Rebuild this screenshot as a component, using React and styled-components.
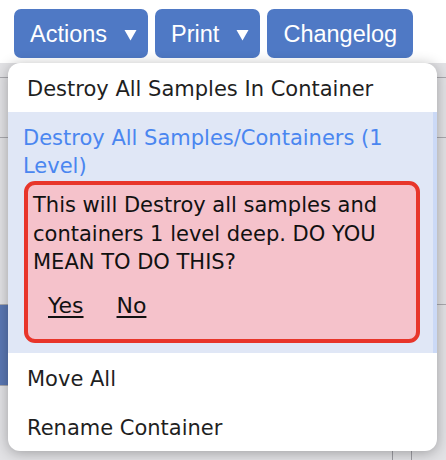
import React from "react";
import styled, { createGlobalStyle } from "styled-components";

const GlobalStyle = createGlobalStyle`
  html, body {
    margin: 0;
    padding: 0;
    background: #ffffff;
  }
`;

const Page = styled.div`
  position: relative;
  width: 446px;
  height: 460px;
  overflow: hidden;
  background: #ffffff;
  font-family: "DejaVu Sans", Verdana, sans-serif;
`;

const Toolbar = styled.div`
  display: flex;
  gap: 7px;
  padding: 9px 14px 0;
`;

const ToolButton = styled.div`
  display: flex;
  align-items: center;
  gap: ${(p) => (p.$caret ? "17px" : "0")};
  height: 49px;
  padding: 2px ${(p) => (p.$caret ? "11px" : "16px")} 0 16px;
  box-sizing: border-box;
  background: #4f79c5;
  border-radius: 7px;
  color: #ffffff;
  font-family: "Liberation Sans", Arial, sans-serif;
  font-size: 23.5px;
  white-space: nowrap;
`;

const Caret = () => (
  <svg width="13" height="12" viewBox="0 0 13 12">
    <path d="M0.5 1 L12.5 1 L6.5 11.5 Z" fill="#ffffff" />
  </svg>
);

const Underlay = styled.div`
  margin-top: 5px;
  height: 420px;
  background: #e2e2e5;
  display: flex;
  flex-direction: column;
`;

const UnderRow = styled.div`
  height: ${(p) => p.$h}px;
  border-bottom: 1px solid #a9a9ae;
  background: ${(p) => (p.$accent ? "#5a77b3" : "transparent")};
  width: ${(p) => (p.$accent ? "8px" : "auto")};
`;

const Footer = styled.div`
  flex: 1;
  display: flex;
  justify-content: flex-end;
  gap: 18px;
  padding-right: 34px;
`;

const FooterLine = styled.div`
  width: 1px;
  background: #9d9da3;
`;

const Menu = styled.div`
  position: absolute;
  top: 63px;
  left: 8px;
  width: 429px;
  background: #ffffff;
  border-radius: 12px;
  overflow: hidden;
  box-shadow: 0 2px 14px rgba(0, 0, 0, 0.3);
  font-size: 21px;
  line-height: 28px;
`;

const MenuItem = styled.div`
  padding: 12px 16px 9px 19px;
  color: #1f1f1f;
  white-space: nowrap;
`;

const ActiveItem = styled.div`
  padding: 12px 13px 10px 15px;
  background: #e0e7f6;
  border-right: 4px solid #cbd9f6;
`;

const ActiveLabel = styled.div`
  color: #4a86f0;
  margin-right: 30px;
`;

const ConfirmBox = styled.div`
  margin: 1px 0 0 1px;
  border: 4px solid #e8352a;
  border-radius: 11px;
  background: #f5c2cb;
  padding: 6px 6px 19px 5px;
  color: #111111;
`;

const Message = styled.div`
  line-height: 28.5px;
`;

const Choices = styled.div`
  display: flex;
  gap: 33px;
  margin: 15px 0 0 15px;
  font-size: 22px;
`;

const Choice = styled.span`
  color: #111111;
  text-decoration: underline;
  text-underline-offset: 3px;
  text-decoration-thickness: 2px;
`;

export default function App() {
  return (
    <Page>
      <GlobalStyle />
      <Toolbar>
        <ToolButton $caret>
          Actions
          <Caret />
        </ToolButton>
        <ToolButton $caret>
          Print
          <Caret />
        </ToolButton>
        <ToolButton>Changelog</ToolButton>
      </Toolbar>
      <Underlay>
        <UnderRow $h={14} />
        <UnderRow $h={59} />
        <UnderRow $h={166} />
        <UnderRow $h={80} $accent />
        <Footer>
          <FooterLine />
          <FooterLine />
        </Footer>
      </Underlay>
      <Menu>
        <MenuItem>Destroy All Samples In Container</MenuItem>
        <ActiveItem>
          <ActiveLabel>Destroy All Samples/Containers (1 Level)</ActiveLabel>
          <ConfirmBox>
            <Message>
              This will Destroy all samples and containers 1 level deep. DO YOU
              MEAN TO DO THIS?
            </Message>
            <Choices>
              <Choice>Yes</Choice>
              <Choice>No</Choice>
            </Choices>
          </ConfirmBox>
        </ActiveItem>
        <MenuItem>Move All</MenuItem>
        <MenuItem>Rename Container</MenuItem>
      </Menu>
    </Page>
  );
}
